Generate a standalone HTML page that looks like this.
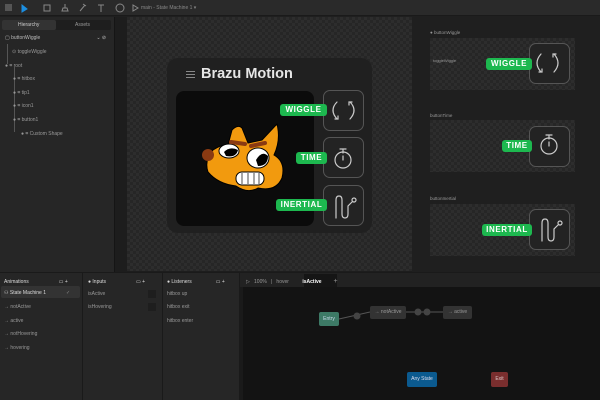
<!DOCTYPE html>
<html><head><style>
*{margin:0;padding:0;box-sizing:border-box}
body{width:600px;height:400px;background:#1f1f1f;font-family:"Liberation Sans",sans-serif;position:relative;overflow:hidden;color:#aaa}
.a{position:absolute}
.chk{background-color:#262626;background-image:linear-gradient(45deg,#2d2d2d 25%,transparent 25%,transparent 75%,#2d2d2d 75%),linear-gradient(45deg,#2d2d2d 25%,transparent 25%,transparent 75%,#2d2d2d 75%);background-size:6px 6px;background-position:0 0,3px 3px}
.t{font-size:5px;color:#999;white-space:nowrap}
.btn{position:absolute;border:1px solid #555;border-radius:7px;background:#232323}
.lab{position:absolute;background:#1db84f;color:#fff;font-weight:bold;font-size:8px;letter-spacing:.6px;border-radius:3px;text-align:center;line-height:12px;height:12px}
</style></head><body>
<div class="a" style="left:0;top:0;width:600px;height:16px;background:#2a2a2a;border-bottom:1px solid #1a1a1a"></div>
<div class="a" style="left:5px;top:4px;width:7px;height:7px;background:#555"></div>
<svg class="a" style="left:18px;top:2px" width="130" height="12" viewBox="0 0 130 12" fill="none" stroke="#888" stroke-width="1">
<path d="M4 3v7l5-3z" fill="#1c8ee0" stroke="#1c8ee0"/>
<rect x="26" y="3" width="6" height="6"/><path d="M44 9h6l-1-3h-4zM47 6V2"/>
<path d="M62 9l5-6M65 2l3 2"/><path d="M80 3h6M83 3v7"/><circle cx="102" cy="6" r="4"/><path d="M115 3v6l5-3z"/>
</svg>
<div class="a t" style="left:141px;top:5px;color:#888">main - State Machine 1 ▾</div>
<div class="a" style="left:0;top:17px;width:114px;height:255px;background:#262626"></div>
<div class="a" style="left:2px;top:20px;width:109px;height:10px;background:#1e1e1e;border-radius:2px"></div>
<div class="a" style="left:2px;top:20px;width:54px;height:10px;background:#333;border-radius:2px"></div>
<div class="a t" style="left:18px;top:22px;color:#ccc">Hierarchy</div>
<div class="a t" style="left:75px;top:22px">Assets</div>
<div class="a t" style="left:5px;top:35px;color:#bbb">▢ buttonWiggle<span style="margin-left:56px">⌄ ⊘</span></div>
<div class="a" style="left:7px;top:44px;width:1px;height:20px;background:#555"></div>
<div class="a" style="left:14px;top:67px;width:1px;height:65px;background:#555"></div>
<div class="a t" style="left:12px;top:49px">⊙ toggleWiggle</div>
<div class="a t" style="left:5px;top:63px">● ⌗ root</div>
<div class="a t" style="left:13px;top:76px">● ⌗ hitbox</div>
<div class="a t" style="left:13px;top:90px">● ⌗ tip1</div>
<div class="a t" style="left:13px;top:103px">● ⌗ icon1</div>
<div class="a t" style="left:13px;top:117px">● ⌗ button1</div>
<div class="a t" style="left:21px;top:131px">● ⌗ Custom Shape</div>
<div class="a" style="left:114px;top:17px;width:298px;height:255px;background:#1d1d1d;border-left:1px solid #151515"></div>
<div class="a chk" style="left:127px;top:17px;width:285px;height:254px"></div>
<div class="a" style="left:167px;top:58px;width:205px;height:175px;background:#202020;border-radius:11px"></div>
<div class="a" style="left:186px;top:71px;width:9px;height:1px;background:#888;box-shadow:0 3px #888,0 6px #888"></div>
<div class="a" style="left:201px;top:66px;font-size:14.5px;font-weight:bold;color:#e6e6e6;white-space:nowrap">Brazu Motion</div>
<div class="a" style="left:176px;top:91px;width:138px;height:135px;background:#0b0b0b;border-radius:8px"></div>
<svg class="a" style="left:0;top:0" width="600" height="400" viewBox="0 0 600 400">
<path d="M232 130 Q238 124 242 128 L248 143 L262 140 L277 124 Q281 140 274 155 Q286 162 282 178 Q276 192 258 188 Q248 194 236 186 Q218 184 208 172 Q204 160 213 150 Q222 144 228 145 Z" fill="#f29a0e" stroke="#000" stroke-width="1"/>
<ellipse cx="229" cy="151" rx="10" ry="7" fill="#fff" stroke="#000"/>
<path d="M224 152 Q230 146 238 150 Q236 158 226 156Z" fill="#000"/>
<ellipse cx="258" cy="158" rx="11" ry="10" fill="#fff" stroke="#000"/>
<path d="M256 160 Q262 150 268 156 Q268 166 258 166Z" fill="#000"/>
<path d="M231 142 L245 144" stroke="#8a3a12" stroke-width="4" stroke-linecap="round"/>
<path d="M251 146 L265 143" stroke="#8a3a12" stroke-width="4" stroke-linecap="round"/>
<circle cx="208" cy="155" r="6" fill="#8a3a12"/>
<rect x="236" y="172" width="28" height="13" rx="6" fill="#fff" stroke="#000"/>
<path d="M242 173v11M248 173v11M254 173v11M259 173v11" stroke="#000" stroke-width=".7"/>
</svg>
<div class="btn" style="left:323px;top:90px;width:41px;height:41px"></div>
<div class="btn" style="left:323px;top:137px;width:41px;height:41px"></div>
<div class="btn" style="left:323px;top:185px;width:41px;height:41px"></div>
<svg class="a" style="left:0;top:0" width="600" height="400" fill="none" stroke="#ccc" stroke-width="1.2" stroke-linecap="round">
<path d="M337 102 Q329 110 337 119M335 119h3v-3M350 102 Q358 110 350 119M352 102h-3v3"/>
<circle cx="343" cy="160" r="8"/><path d="M340 149h6M343 150v3M343 160v-4"/>
<path d="M336 218 V200 Q336 196 339 196 Q342 196 342 200 V214 Q342 218 345 218 Q348 218 348 214 V206 L352 202"/><circle cx="354" cy="200" r="2"/>
</svg>
<div class="lab" style="left:280px;top:104px;width:47px">WIGGLE</div>
<div class="lab" style="left:296px;top:152px;width:31px">TIME</div>
<div class="lab" style="left:276px;top:199px;width:51px">INERTIAL</div>
<div class="a t" style="left:430px;top:30px;font-size:4.5px">● buttonWiggle</div>
<div class="a chk" style="left:430px;top:38px;width:145px;height:52px"></div>
<div class="a t" style="left:433px;top:58px;font-size:4px">toggleWiggle</div>
<div class="a t" style="left:430px;top:113px;font-size:4.5px">buttonTime</div>
<div class="a chk" style="left:430px;top:120px;width:145px;height:52px"></div>
<div class="a t" style="left:430px;top:196px;font-size:4.5px">buttonInertial</div>
<div class="a chk" style="left:430px;top:204px;width:145px;height:52px"></div>
<div class="btn" style="left:529px;top:43px;width:41px;height:41px"></div>
<div class="btn" style="left:529px;top:126px;width:41px;height:41px"></div>
<div class="btn" style="left:529px;top:209px;width:41px;height:41px"></div>
<svg class="a" style="left:0;top:0" width="600" height="400" fill="none" stroke="#ccc" stroke-width="1.2" stroke-linecap="round">
<path d="M541 54 Q533 63 541 72M539 72h3v-3M554 54 Q562 63 554 72M556 54h-3v3"/>
<circle cx="549" cy="146" r="8"/><path d="M546 135h6M549 136v3M549 146v-4"/>
<path d="M542 241 V223 Q542 219 545 219 Q548 219 548 223 V237 Q548 241 551 241 Q554 241 554 237 V229 L558 225"/><circle cx="560" cy="223" r="2"/>
</svg>
<div class="lab" style="left:486px;top:58px;width:46px">WIGGLE</div>
<div class="lab" style="left:502px;top:140px;width:30px">TIME</div>
<div class="lab" style="left:482px;top:224px;width:50px">INERTIAL</div>
<div class="a" style="left:0;top:272px;width:600px;height:128px;background:#1a1a1a"></div>
<div class="a" style="left:0;top:273px;width:82px;height:127px;background:#262626"></div>
<div class="a" style="left:83px;top:273px;width:79px;height:127px;background:#262626"></div>
<div class="a" style="left:163px;top:273px;width:76px;height:127px;background:#262626"></div>
<div class="a t" style="left:4px;top:279px;color:#ddd">Animations<span style="margin-left:30px">▭ +</span></div>
<div class="a" style="left:1px;top:286px;width:79px;height:12px;background:#333;border-radius:2px"></div>
<div class="a t" style="left:4px;top:290px;color:#ddd">⚇ State Machine 1<span style="margin-left:20px;color:#888">✓</span></div>
<div class="a t" style="left:4px;top:304px">→ notActive</div>
<div class="a t" style="left:4px;top:318px">→ active</div>
<div class="a t" style="left:4px;top:331px">→ notHovering</div>
<div class="a t" style="left:4px;top:345px">→ hovering</div>
<div class="a t" style="left:88px;top:279px;color:#ddd">● Inputs<span style="margin-left:30px">▭ +</span></div>
<div class="a t" style="left:88px;top:291px">isActive</div>
<div class="a t" style="left:88px;top:304px">isHovering</div>
<div class="a" style="left:148px;top:290px;width:8px;height:8px;background:#1e1e1e"></div>
<div class="a" style="left:148px;top:303px;width:8px;height:8px;background:#1e1e1e"></div>
<div class="a t" style="left:167px;top:279px;color:#ddd">● Listeners<span style="margin-left:24px">▭ +</span></div>
<div class="a t" style="left:167px;top:291px">hitbox up</div>
<div class="a t" style="left:167px;top:304px">hitbox exit</div>
<div class="a t" style="left:167px;top:318px">hitbox enter</div>
<div class="a" style="left:240px;top:273px;width:360px;height:14px;background:#222"></div>
<div class="a" style="left:304px;top:274px;width:33px;height:13px;background:#151515"></div>
<div class="a t" style="left:246px;top:278px">▷ &nbsp;&nbsp;100% &nbsp;&nbsp;|&nbsp;&nbsp; hover <span style="margin-left:12px;color:#fff;font-weight:bold">isActive</span><span style="margin-left:12px;font-size:7px">+</span></div>
<div class="a" style="left:243px;top:287px;width:357px;height:113px;background:#131313"></div>
<svg class="a" style="left:0;top:0" width="600" height="400"><path d="M339 319L370 312M406 312H443" stroke="#555"/><circle cx="357" cy="316" r="3.5" fill="#444"/><circle cx="418" cy="312" r="3.5" fill="#444"/><circle cx="427" cy="312" r="3.5" fill="#444"/></svg>
<div class="a t" style="left:319px;top:312px;width:20px;height:14px;background:#3d7a66;border-radius:2px;line-height:14px;text-align:center;color:#cde">Entry</div>
<div class="a t" style="left:370px;top:306px;width:36px;height:13px;background:#333;border-radius:2px;line-height:13px;text-align:center">→ notActive</div>
<div class="a t" style="left:443px;top:306px;width:29px;height:13px;background:#333;border-radius:2px;line-height:13px;text-align:center">→ active</div>
<div class="a t" style="left:407px;top:372px;width:30px;height:15px;background:#0b5a8f;border-radius:2px;line-height:15px;text-align:center;color:#dde">Any State</div>
<div class="a t" style="left:491px;top:372px;width:17px;height:15px;background:#7a2e2e;border-radius:2px;line-height:15px;text-align:center;color:#dcc">Exit</div>
</body></html>
